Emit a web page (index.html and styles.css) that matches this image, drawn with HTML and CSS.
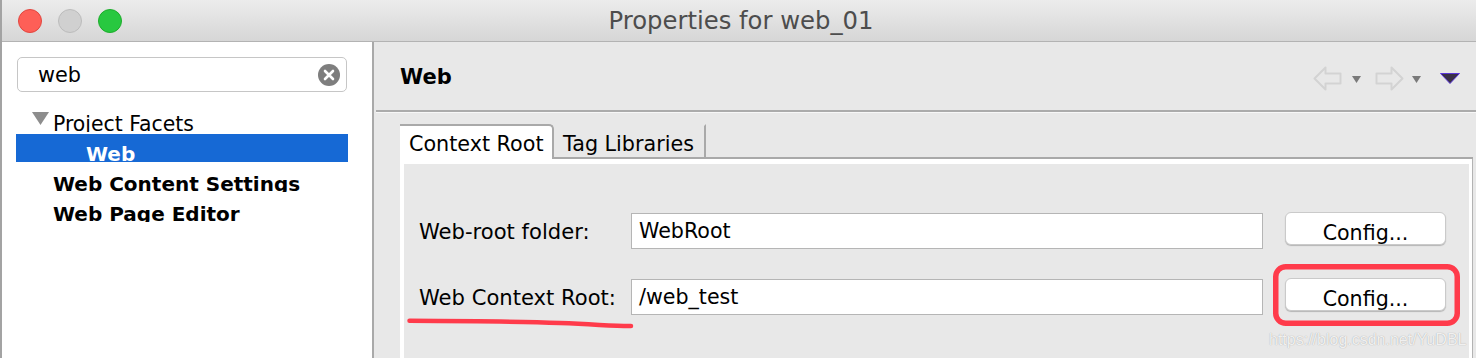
FILE: index.html
```html
<!DOCTYPE html>
<html>
<head>
<meta charset="utf-8">
<title>Properties for web_01</title>
<link rel="stylesheet" href="styles.css">
</head>
<body>
<div class="window">
  <header class="titlebar">
    <div class="lights">
      <span class="light red"></span>
      <span class="light gray"></span>
      <span class="light green"></span>
    </div>
    <div class="title">Properties for web_01</div>
    <div></div>
  </header>
  <div class="main">
    <aside class="sidebar">
      <div class="search">
        <span class="search-text">web</span>
        <svg class="clear" width="22" height="22" viewBox="0 0 22 22"><circle cx="11" cy="11" r="11" fill="#7e7e7e"/><path d="M7 7L15 15M15 7L7 15" stroke="#fff" stroke-width="2.6" stroke-linecap="round"/></svg>
      </div>
      <ul class="tree">
        <li class="node parent"><svg class="twisty" width="17" height="13" viewBox="0 0 17 13"><polygon points="0,0 17,0 8.5,13" fill="#8d8d8d"/></svg><span>Project Facets</span></li>
        <li class="node selected"><span>Web</span></li>
        <li class="node leaf"><span>Web Content Settings</span></li>
        <li class="node leaf"><span>Web Page Editor</span></li>
      </ul>
    </aside>
    <section class="content">
      <div class="page-header">
        <h1 class="page-title">Web</h1>
        <div class="nav">
          <svg class="nav-arrow" width="29" height="25" viewBox="0 0 29 25"><polygon points="1.5,12.5 12.5,1.5 12.5,7.5 27.5,7.5 27.5,17.5 12.5,17.5 12.5,23.5" fill="none" stroke="#d3d3d3" stroke-width="2" stroke-linejoin="round"/></svg>
          <svg class="nav-drop" width="9" height="7" viewBox="0 0 9 7"><polygon points="0,0 9,0 4.5,7" fill="#7a7a7a"/></svg>
          <svg class="nav-arrow fwd" width="29" height="25" viewBox="0 0 29 25"><polygon points="27.5,12.5 16.5,1.5 16.5,7.5 1.5,7.5 1.5,17.5 16.5,17.5 16.5,23.5" fill="none" stroke="#d3d3d3" stroke-width="2" stroke-linejoin="round"/></svg>
          <svg class="nav-drop second" width="9" height="7" viewBox="0 0 9 7"><polygon points="0,0 9,0 4.5,7" fill="#7a7a7a"/></svg>
          <svg class="view-menu" width="20" height="11" viewBox="0 0 20 11"><polygon points="0.5,0.5 19.5,0.5 10,10.5" fill="#3a3047" stroke="#5a35d8" stroke-width="1"/></svg>
        </div>
      </div>
      <div class="tabfolder">
        <div class="tabs">
          <div class="tab active">Context Root</div>
          <div class="tab inactive">Tag Libraries</div>
          <div class="tab-fill"></div>
        </div>
        <div class="tab-body">
          <div class="form">
            <div class="row">
              <div class="label">Web-root folder:</div>
              <div class="field">WebRoot</div>
              <div class="button">Config...</div>
            </div>
            <div class="row">
              <div class="label">Web Context Root:</div>
              <div class="field">/web_test</div>
              <div class="button">Config...</div>
            </div>
          </div>
        </div>
      </div>
    </section>
  </div>
</div>
<svg class="annotations" width="1476" height="358" viewBox="0 0 1476 358">
  <path d="M409.5,320.8 C460,321 520,321.4 560,323 S615,326.2 631,326" fill="none" stroke="#ff3b4b" stroke-width="4.5" stroke-linecap="round"/>
  <rect x="1275.75" y="266.75" width="181.5" height="56.5" rx="10" ry="10" fill="none" stroke="#ff3b4b" stroke-width="5.5"/>
</svg>
<div class="watermark">https://blog.csdn.net/YuDBL</div>
</body>
</html>
```

FILE: styles.css
```css
body {
  margin: 0;
  width: 1476px;
  height: 358px;
  overflow: hidden;
  position: relative;
  font-family: "DejaVu Sans", sans-serif;
  color: #000;
  background: #e8e8e8;
}

.window {
  height: 358px;
  box-sizing: border-box;
  border-left: 2px solid #a3a3a3;
  display: flex;
  flex-direction: column;
}

/* ---------- title bar ---------- */
.titlebar {
  flex: none;
  height: 42px;
  box-sizing: border-box;
  border-bottom: 1px solid #b3b3b3;
  background: linear-gradient(#ececec, #d6d6d6);
  display: grid;
  grid-template-columns: 1fr auto 1fr;
  align-items: center;
}

.lights {
  display: flex;
  gap: 16px;
  padding-left: 16px;
}

.light {
  width: 24px;
  height: 24px;
  border-radius: 50%;
  box-sizing: border-box;
}

.light.red { background: #fe5f57; border: 1px solid #e2463f; }
.light.gray { background: #d0d0d0; border: 1px solid #bcbcbc; }
.light.green { background: #28c840; border: 1px solid #1dad2b; }

.title {
  font-family: "DejaVu Sans", sans-serif;
  font-size: 24.3px;
  color: #4d4d4d;
  padding-left: 4px;
}

/* ---------- main ---------- */
.main {
  flex: 1;
  display: flex;
  min-height: 0;
}

.sidebar {
  flex: none;
  width: 370px;
  background: #fff;
  border-right: 2px solid #a9a9a9;
  padding-top: 15px;
}

.search {
  margin-left: 15px;
  width: 330px;
  height: 35px;
  box-sizing: border-box;
  border: 1px solid #c6c6c6;
  border-radius: 5px;
  display: flex;
  align-items: center;
  justify-content: space-between;
  padding: 0 6px 0 20px;
  font-size: 20.8px;
}

.clear { display: block; }

.tree {
  list-style: none;
  margin: 12px 0 0 14px;
  padding: 0;
  width: 332px;
  display: flex;
  flex-direction: column;
  gap: 2px;
}

.node {
  height: 28px;
  overflow: hidden;
  display: flex;
  align-items: flex-start;
  font-size: 20.4px;
  line-height: 40px;
  white-space: nowrap;
}

.twisty {
  flex: none;
  margin: 8px 4px 0 16px;
}

.node.selected {
  background: #1669d5;
  color: #fff;
  font-weight: bold;
  font-size: 20px;
  padding-left: 70px;
}

.node.leaf {
  font-weight: bold;
  font-size: 20px;
  padding-left: 37px;
}

/* ---------- content ---------- */
.content {
  flex: 1;
  display: flex;
  flex-direction: column;
  min-width: 0;
}

.page-header {
  flex: none;
  height: 70px;
  box-sizing: border-box;
  margin-left: 2px;
  border-bottom: 2px solid #ababab;
  box-shadow: 0 1px 0 #f7f7f7;
  display: flex;
  justify-content: space-between;
  align-items: flex-start;
  padding: 23px 16px 0 24px;
}

.page-title {
  margin: 0;
  font-size: 21px;
  font-weight: bold;
  line-height: normal;
}

.nav {
  display: flex;
  align-items: flex-start;
  margin-top: 1px;
}

.nav svg { display: block; flex: none; }
.nav-drop { margin: 10px 0 0 10px; }
.nav-arrow.fwd { margin-left: 14px; }
.nav-drop.second { margin-left: 8px; }
.view-menu { margin: 7px 0 0 19px; }

.tabfolder {
  flex: 1;
  display: flex;
  flex-direction: column;
  margin: 12px 3px 0 26px;
}

.tabs {
  flex: none;
  display: flex;
  height: 35px;
}

.tab {
  box-sizing: border-box;
  height: 35px;
  padding: 4px 0 0 9px;
  line-height: 29px;
  font-size: 20.7px;
  letter-spacing: 0;
  border-top: 2px solid transparent;
  white-space: nowrap;
}

.tab.active {
  width: 154px;
  background: #fff;
  border-top-color: #a9a9a9;
  border-right: 2px solid #a9a9a9;
  border-top-right-radius: 5px;
}

.tab.inactive {
  width: 152px;
  padding-left: 9px;
  border-right: 2px solid #a9a9a9;
  border-bottom: 2px solid #a9a9a9;
}

.tab-fill {
  flex: 1;
  border-bottom: 2px solid #a9a9a9;
}

.tab-body {
  flex: 1;
  background: #fff;
  padding: 5px 3px 0 4px;
  border-right: 1px solid #b3b3b3;
  display: flex;
}

.form {
  flex: 1;
  background: #e8e8e8;
  padding: 49px 0 0 15px;
  display: flex;
  flex-direction: column;
  gap: 30px;
}

.row {
  display: flex;
  align-items: flex-start;
  height: 36px;
}

.label {
  flex: none;
  width: 212px;
  line-height: 37px;
  font-size: 21.1px;
  white-space: nowrap;
}

.field {
  flex: none;
  width: 632px;
  height: 36px;
  box-sizing: border-box;
  border: 1px solid #b5b5b5;
  background: #fff;
  padding-left: 7px;
  line-height: 35px;
  font-size: 20.6px;
}

.button {
  flex: none;
  margin: -1px 0 0 22px;
  width: 161px;
  height: 33px;
  box-sizing: border-box;
  border-radius: 6px;
  background: #fff;
  border: 1px solid #cacaca;
  box-shadow: 0 1px 1px rgba(0, 0, 0, 0.22);
  text-align: center;
  padding-top: 7px;
  line-height: 26px;
  font-size: 20.6px;
}

/* ---------- overlays ---------- */
.annotations {
  position: absolute;
  left: 0;
  top: 0;
  pointer-events: none;
}

.watermark {
  position: absolute;
  left: 1269px;
  top: 331px;
  font-family: "Liberation Sans", sans-serif;
  font-size: 16px;
  line-height: normal;
  color: rgba(255, 255, 255, 0.85);
  text-shadow: 0 0 1px rgba(0, 0, 0, 0.35);
  white-space: nowrap;
}
```
